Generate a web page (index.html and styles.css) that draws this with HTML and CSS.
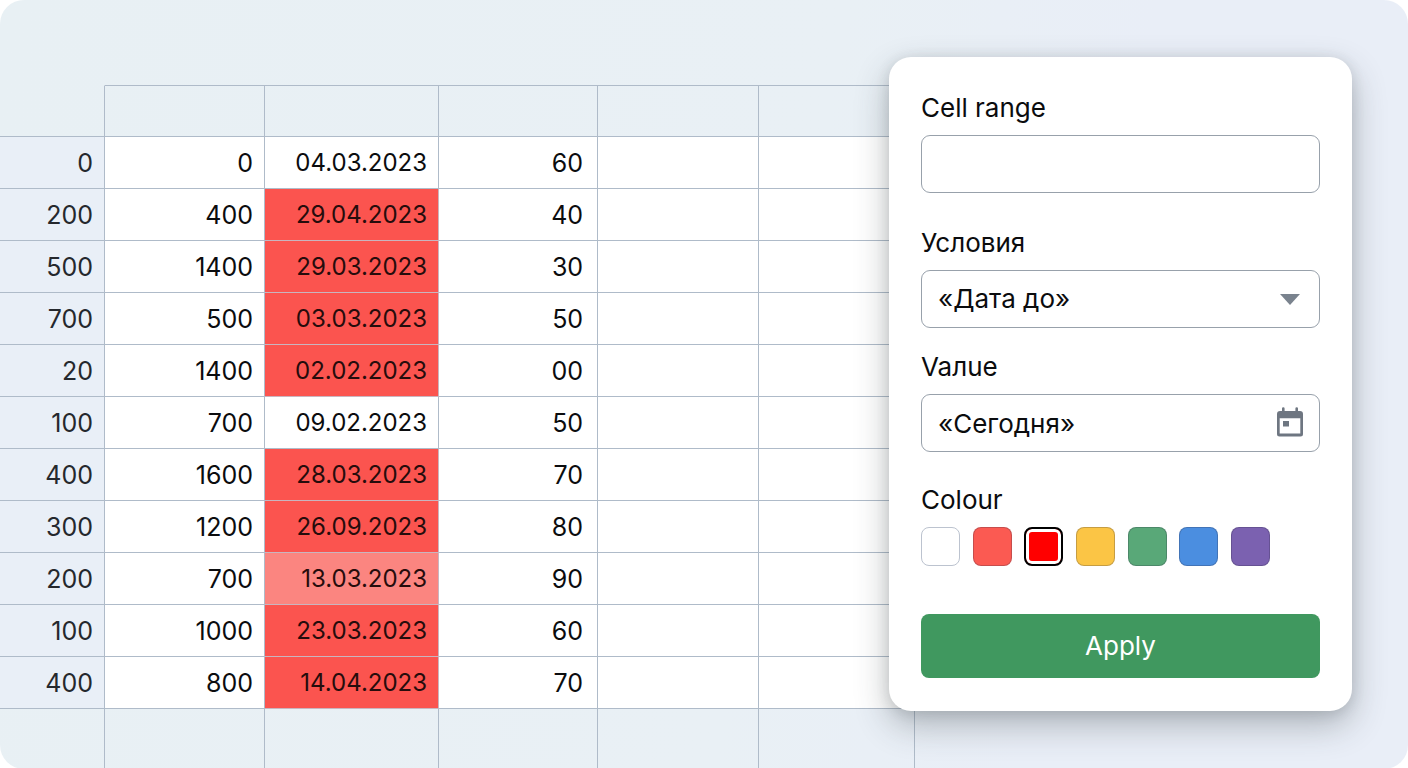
FILE: index.html
```
<!DOCTYPE html>
<html lang="ru">
<head>
<meta charset="utf-8">
<meta name="viewport" content="width=device-width, initial-scale=1">
<title>Conditional formatting</title>
<link rel="stylesheet" href="styles.css">
</head>
<body>
<main class="stage">
  <table class="sheet">
    <colgroup><col class="c-index"><col class="c-amount"><col class="c-date"><col class="c-score"><col class="c-blank"><col class="c-last"></colgroup>
    <thead>
      <tr><td class="corner"></td><td></td><td></td><td></td><td></td><td></td></tr>
    </thead>
    <tbody>
      <tr><th scope="row">0</th><td>0</td><td class="date">04.03.2023</td><td class="score">60</td><td></td><td></td></tr>
      <tr><th scope="row">200</th><td>400</td><td class="date hit">29.04.2023</td><td class="score">40</td><td></td><td></td></tr>
      <tr><th scope="row">500</th><td>1400</td><td class="date hit">29.03.2023</td><td class="score">30</td><td></td><td></td></tr>
      <tr><th scope="row">700</th><td>500</td><td class="date hit">03.03.2023</td><td class="score">50</td><td></td><td></td></tr>
      <tr><th scope="row">20</th><td>1400</td><td class="date hit">02.02.2023</td><td class="score">00</td><td></td><td></td></tr>
      <tr><th scope="row">100</th><td>700</td><td class="date">09.02.2023</td><td class="score">50</td><td></td><td></td></tr>
      <tr><th scope="row">400</th><td>1600</td><td class="date hit">28.03.2023</td><td class="score">70</td><td></td><td></td></tr>
      <tr><th scope="row">300</th><td>1200</td><td class="date hit">26.09.2023</td><td class="score">80</td><td></td><td></td></tr>
      <tr><th scope="row">200</th><td>700</td><td class="date hit hit-soft">13.03.2023</td><td class="score">90</td><td></td><td></td></tr>
      <tr><th scope="row">100</th><td>1000</td><td class="date hit">23.03.2023</td><td class="score">60</td><td></td><td></td></tr>
      <tr><th scope="row">400</th><td>800</td><td class="date hit">14.04.2023</td><td class="score">70</td><td></td><td></td></tr>
    </tbody>
    <tfoot>
      <tr><td></td><td></td><td></td><td></td><td></td><td></td></tr>
    </tfoot>
  </table>

  <form class="panel">
    <div class="field field-range">
      <label for="range">Cell range</label>
      <input class="control" id="range" type="text">
    </div>
    <div class="field field-condition">
      <label for="condition">Условия</label>
      <div class="control-wrap">
        <select class="control" id="condition"><option>«Дата до»</option></select>
        <svg class="arrow" viewBox="0 0 20 11" aria-hidden="true"><path d="M0 0h20L10 11z"/></svg>
      </div>
    </div>
    <div class="field field-value">
      <label for="value">Vaлue</label>
      <div class="control-wrap">
        <input class="control" id="value" type="text" value="«Сегодня»">
        <button class="calendar" type="button" aria-label="Calendar">
          <svg viewBox="0 0 26 30" aria-hidden="true"><path fill-rule="evenodd" d="M5 1.500a1.300 1.300 0 0 1 2.600 0V4h10.800V1.500a1.300 1.300 0 0 1 2.600 0V4H23a3 3 0 0 1 3 3v20a2.500 2.500 0 0 1-2.500 2.500h-21A2.500 2.500 0 0 1 0 27V7a3 3 0 0 1 3-3h2zM2.700 11.200v15.300h20.600V11.200zM6 14h6v5.500H6z"/></svg>
        </button>
      </div>
    </div>
    <fieldset class="colours">
      <legend>Colour</legend>
      <div class="swatches">
        <input class="swatch white" type="radio" name="colour" aria-label="White">
        <input class="swatch coral" type="radio" name="colour" aria-label="Coral">
        <input class="swatch red" type="radio" name="colour" aria-label="Red" checked>
        <input class="swatch yellow" type="radio" name="colour" aria-label="Yellow">
        <input class="swatch green" type="radio" name="colour" aria-label="Green">
        <input class="swatch blue" type="radio" name="colour" aria-label="Blue">
        <input class="swatch purple" type="radio" name="colour" aria-label="Purple">
      </div>
    </fieldset>
    <button class="apply" type="submit">Apply</button>
  </form>
</main>
</body>
</html>
```
FILE: styles.css
```
* { box-sizing: border-box; }

body {
  margin: 0;
  background: #fff;
  color: #0b0c0e;
  font-family: Inter, "Liberation Sans", sans-serif;
  font-size: 25px;
  line-height: 32px;
}

.stage {
  position: relative;
  min-height: 100vh;
  padding-top: 85px;
  overflow: hidden;
  border-radius: 24px;
  background: linear-gradient(100deg, #e8f0f4, #e9f0f5 55%, #e9eef7 75%);
}

/* Spreadsheet */
.sheet {
  width: 65%;
  table-layout: fixed;
  border-collapse: separate;
  border-spacing: 0;
  text-align: right;
}

.c-index { width: 105px; }
.c-amount { width: 160px; }
.c-date { width: 174px; }
.c-score { width: 159px; }
.c-blank { width: 161px; }
.c-last { width: 156px; }

.sheet th,
.sheet td {
  height: 52px;
  padding: 0 11px 0 0;
  border: 0 solid #afbbc9;
  border-width: 0 1px 1px 0;
  font-weight: 400;
}

.sheet th {
  background: #e9eff7;
  color: #25282d;
}

.sheet tbody td { background: #fff; }
.sheet thead td { border-top-width: 1px; }
.sheet thead .corner { border-top-color: transparent; }

.sheet tfoot td {
  height: 60px;
  border-bottom: 0;
}

.sheet tbody .score { padding-right: 14px; }
.sheet tbody .date { font-size: 24px; }

.sheet tbody .hit {
  background: #fb544f;
  border-color: #c9b5bf;
  color: #260c0c;
}

.sheet tbody .hit-soft { background: #fb8580; }

/* Formatting panel: floats above the sheet */
.panel {
  position: absolute;
  top: 57px;
  right: 56px;
  display: flex;
  flex-direction: column;
  width: 463px;
  max-width: calc(100% - 112px);
  padding: 35px 32px 33px;
  border-radius: 22px;
  background: #fff;
  box-shadow: 0 14px 34px rgba(50, 58, 62, .32), 0 2px 14px rgba(50, 58, 62, .14);
  font-size: 26px;
}

.field {
  display: flex;
  flex-direction: column;
  gap: 11px;
}

.field-range { margin-bottom: 34px; }
.field-condition { margin-bottom: 23px; }
.field-value { margin-bottom: 32px; }

.control-wrap {
  position: relative;
  display: flex;
}

.control {
  width: 100%;
  height: 58px;
  margin: 0;
  padding: 0 56px 0 16px;
  border: 1px solid #98a1ab;
  border-radius: 9px;
  appearance: none;
  background: #fff;
  color: inherit;
  font: inherit;
}

.arrow {
  position: absolute;
  top: 24px;
  right: 20px;
  width: 20px;
  height: 11px;
  fill: #7a838e;
  pointer-events: none;
}

.calendar {
  position: absolute;
  top: 13px;
  right: 17px;
  width: 26px;
  height: 30px;
  padding: 0;
  border: 0;
  background: none;
}

.calendar svg {
  display: block;
  width: 26px;
  height: 30px;
  fill: #6e7681;
}

.colours {
  min-width: 0;
  margin: 0 0 48px;
  padding: 0;
  border: 0;
}

.colours legend { padding: 0; }

.swatches {
  display: flex;
  justify-content: space-between;
  width: 349px;
  max-width: 100%;
  padding-top: 11px;
}

.swatch {
  width: 39px;
  height: 39px;
  margin: 0;
  border: 1px solid rgba(40, 40, 60, .25);
  border-radius: 8px;
  appearance: none;
}

.swatch:checked {
  border: 2px solid #000;
  box-shadow: inset 0 0 0 3px #fff;
}

.white { border-color: #bcc3cf; background: #fff; }
.coral { background: #fb5a52; }
.red { background: #f00; }
.yellow { background: #fbc545; }
.green { background: #59a878; }
.blue { background: #4b8ee0; }
.purple { background: #7b61b0; }

.apply {
  height: 64px;
  border: 0;
  border-radius: 8px;
  background: #40985f;
  color: #fff;
  font: inherit;
}
```
